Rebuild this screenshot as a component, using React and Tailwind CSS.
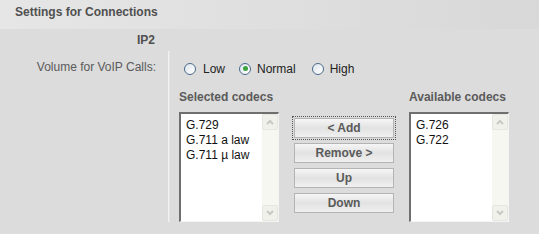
export default function App() {
  const selected = ['G.729', 'G.711 a law', 'G.711 µ law'];
  const available = ['G.726', 'G.722'];

  return (
    <div className="h-[234px] w-[539px] overflow-hidden bg-[#dcdcdc] font-['Liberation_Sans',Arial,sans-serif] text-[12px] text-[#4a4a4a]">
      <div className="h-[29px] bg-gradient-to-r from-[#e6e6e6] to-[#d8d8d8] pl-[15px] pt-[3px] font-bold text-[#505050]">
        Settings for Connections
      </div>
      <div className="flex h-[22px] items-center">
        <div className="w-[155px] text-right font-bold text-[#505050]">IP2</div>
      </div>
      <div className="flex">
        <div className="w-[156px] pt-[7px] text-right text-[#5a5a5a]">Volume for VoIP Calls:</div>
        <div className="ml-[12px] w-[2px] border-l border-[#f2f2f2] bg-[#e4e4e4]" />
        <div className="flex-1 pl-[9px]">
          <div className="flex h-[31px] items-center pl-[5px] pt-[4px] text-[#222]">
            <Radio />
            <span className="ml-[7px] mr-[14px]">Low</span>
            <Radio checked />
            <span className="ml-[6px] mr-[16px]">Normal</span>
            <Radio />
            <span className="ml-[6px]">High</span>
          </div>
          <div className="flex pt-[6px]">
            <div className="w-[100px]">
              <div className="mb-[6px] font-bold text-[#5a5a5a]">Selected codecs</div>
              <ListBox items={selected} />
            </div>
            <div className="ml-[15px] mt-[30px] flex w-[100px] flex-col gap-[5px]">
              <Btn label="< Add" focused />
              <Btn label="Remove >" />
              <Btn label="Up" />
              <Btn label="Down" />
            </div>
            <div className="ml-[15px] w-[100px]">
              <div className="mb-[6px] font-bold text-[#5a5a5a]">Available codecs</div>
              <ListBox items={available} />
            </div>
          </div>
        </div>
      </div>
    </div>
  );
}

function Radio({ checked }) {
  return (
    <span className="flex h-[12px] w-[12px] items-center justify-center rounded-full border border-[#4c6a8c] bg-gradient-to-br from-[#dfe6ee] to-white">
      {checked && <span className="h-[5px] w-[5px] rounded-full bg-[#3ca33c]" />}
    </span>
  );
}

function ListBox({ items }) {
  return (
    <div className="flex h-[110px] w-[100px] border-l-2 border-t-2 border-r border-b border-l-[#6f6f6f] border-t-[#6f6f6f] border-r-[#f4f4f4] border-b-[#f4f4f4] bg-white">
      <div className="flex-1 pl-[5px] pt-[4px] text-[12px] leading-[15px] text-[#111]">
        {items.map((item) => (
          <div key={item}>{item}</div>
        ))}
      </div>
      <div className="flex w-[16px] flex-col justify-between bg-[#f7f7f2]">
        <ScrollBtn up />
        <ScrollBtn />
      </div>
    </div>
  );
}

function ScrollBtn({ up }) {
  return (
    <div className="flex h-[16px] w-[16px] items-center justify-center rounded-[2px] border border-[#e6e6e0] bg-[#f1f1ec]">
      <svg width="8" height="6" viewBox="0 0 8 6">
        <path d={up ? 'M1 5 L4 2 L7 5' : 'M1 1 L4 4 L7 1'} fill="none" stroke="#c9c9c4" strokeWidth="2" />
      </svg>
    </div>
  );
}

function Btn({ label, focused }) {
  return (
    <div className={focused ? 'border border-dotted border-[#555] p-[1px] -m-[2px]' : ''}>
      <div className="flex h-[20px] items-center justify-center border border-[#b4b4b4] bg-gradient-to-b from-[#f6f6f6] via-[#e2e2e2] to-[#f0f0f0] font-bold text-[#5a5a5a]">
        {label}
      </div>
    </div>
  );
}
